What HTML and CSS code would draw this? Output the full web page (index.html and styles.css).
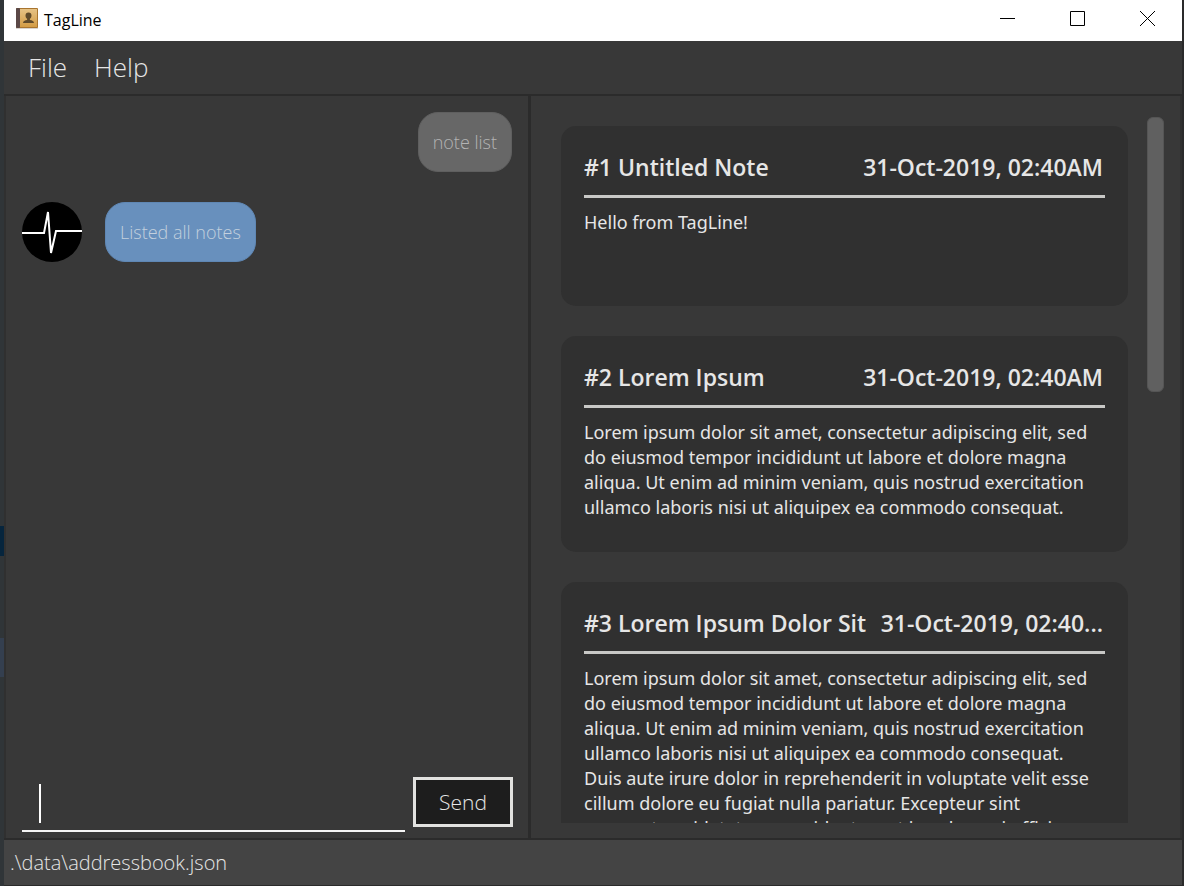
FILE: index.html
```html
<!DOCTYPE html>
<html lang="en">
<head>
<meta charset="utf-8">
<title>TagLine</title>
<link rel="stylesheet" href="styles.css">
</head>
<body>
<div class="desktop">
  <div class="edge edge-left"><span class="edge-top"></span><span class="edge-blue"></span><span class="edge-gap"></span><span class="edge-slate"></span></div>
  <div class="window">
    <header class="titlebar">
      <svg class="app-icon" viewBox="0 0 22 21" aria-hidden="true">
        <defs>
          <linearGradient id="cover" x1="0" y1="0" x2="0" y2="1">
            <stop offset="0" stop-color="#e6c285"/><stop offset="1" stop-color="#d39c45"/>
          </linearGradient>
        </defs>
        <rect x="0" y="19" width="22" height="2" fill="#d8d4d0"/>
        <rect x="0" y="0" width="22" height="20" rx="1" fill="#a9752f"/>
        <rect x="4" y="1" width="17" height="18" fill="url(#cover)"/>
        <rect x="0" y="0" width="4" height="20" rx="1" fill="#5b4847"/>
        <path d="M12.500 4.500c2 0 3 1.300 3 3 0 1.500-.6 2.600-1.600 3.200v1.300c2.200.4 4.100 1 4.100 3H7c0-2 1.900-2.600 4.100-3v-1.300c-1-.6-1.600-1.700-1.600-3.200 0-1.700 1-3 3-3z" fill="#5f4a2b"/>
      </svg>
      <h1 class="app-title">TagLine</h1>
      <div class="window-buttons">
        <button type="button" class="window-button" aria-label="Minimize"><svg viewBox="0 0 15 15"><path d="M0 7.500h15"/></svg></button>
        <button type="button" class="window-button" aria-label="Maximize"><svg viewBox="0 0 15 15"><path d="M.5.5h14v14H.5z"/></svg></button>
        <button type="button" class="window-button" aria-label="Close"><svg viewBox="0 0 15 15"><path d="M0 0l15 15M15 0L0 15"/></svg></button>
      </div>
    </header>
    <nav class="menubar">
      <button type="button" class="menu">File</button>
      <button type="button" class="menu">Help</button>
    </nav>
    <main class="panes">
      <section class="chat" aria-label="Chat">
        <div class="messages">
          <div class="message message-user"><p class="bubble">note list</p></div>
          <div class="message">
            <svg class="avatar" viewBox="0 0 60 60" aria-hidden="true">
              <circle cx="30" cy="30" r="30" fill="#000"/>
              <path d="M0 31h22l4-21 3 41 5-22h26" fill="none" stroke="#fff" stroke-width="2"/>
            </svg>
            <p class="bubble bubble-reply">Listed all notes</p>
          </div>
        </div>
        <form class="command">
          <div class="command-field">
            <span class="caret"></span>
            <input class="command-input" type="text" aria-label="Command">
          </div>
          <button type="button" class="send">Send</button>
        </form>
      </section>
      <section class="notes" aria-label="Notes">
        <div class="note-list">
          <article class="note">
            <header class="note-head"><h2 class="note-title">#1 Untitled Note</h2><time class="note-time">31-Oct-2019, 02:40AM</time></header>
            <p class="note-text">Hello from TagLine!</p>
          </article>
          <article class="note">
            <header class="note-head"><h2 class="note-title">#2 Lorem Ipsum</h2><time class="note-time">31-Oct-2019, 02:40AM</time></header>
            <p class="note-text">Lorem ipsum dolor sit amet, consectetur adipiscing elit, sed do eiusmod tempor incididunt ut labore et dolore magna aliqua. Ut enim ad minim veniam, quis nostrud exercitation ullamco laboris nisi ut aliquipex ea commodo consequat.</p>
          </article>
          <article class="note">
            <header class="note-head"><h2 class="note-title">#3 Lorem Ipsum Dolor Sit</h2><time class="note-time">31-Oct-2019, 02:40...</time></header>
            <p class="note-text">Lorem ipsum dolor sit amet, consectetur adipiscing elit, sed do eiusmod tempor incididunt ut labore et dolore magna aliqua. Ut enim ad minim veniam, quis nostrud exercitation ullamco laboris nisi ut aliquipex ea commodo consequat. Duis aute irure dolor in reprehenderit in voluptate velit esse cillum dolore eu fugiat nulla pariatur. Excepteur sint occaecat cupidatat non proident, sunt in culpa qui officia</p>
          </article>
        </div>
        <div class="scrollbar"><div class="thumb"></div></div>
      </section>
    </main>
    <footer class="statusbar">.\data\addressbook.json</footer>
  </div>
  <div class="edge"></div>
</div>
</body>
</html>
```
FILE: styles.css
```css
* { box-sizing: border-box; }

body {
  margin: 0;
  background: #2b2b2b;
  color: #e6e6e6;
  font-family: "Open Sans", "Noto Sans", sans-serif;
}

h1, h2, p { margin: 0; font-weight: 400; }

button, input { font: inherit; color: inherit; border: 0; padding: 0; background: none; }

.desktop {
  display: grid;
  grid-template-columns: 4px minmax(0, 1fr) 2px;
  height: 100vh;
}

.edge { background: #2a2a2b; }
.edge-left { display: flex; flex-direction: column; background: #303538; }
.edge-top { flex: 0 0 526px; }
.edge-blue { flex: 0 0 30px; background: #06253d; }
.edge-gap { flex: 0 0 82px; }
.edge-slate { flex: 0 0 39px; background: #343f4f; }

.window {
  display: flex;
  flex-direction: column;
  min-height: 0;
  border-bottom: 1px solid #2b2b2b;
  background: #383838;
}

.titlebar {
  display: flex;
  flex: none;
  align-items: center;
  height: 41px;
  padding-left: 12px;
  background: #fff;
  color: #000;
}

.app-icon { width: 22px; height: 21px; margin-bottom: 4px; }
.app-title { margin: 0 auto 2px 6px; font-size: 16px; line-height: 24px; }
.window-buttons { display: flex; align-self: flex-start; height: 37px; }
.window-button { display: grid; place-items: center; width: 70px; }
.window-button svg { width: 15px; height: 15px; fill: none; stroke: #000; }

.menubar {
  display: flex;
  flex: none;
  gap: 27px;
  height: 55px;
  padding: 0 24px 2px;
  border-bottom: 2px solid #2b2b2b;
}

.menu { font-size: 26px; font-weight: 300; }

.panes {
  display: grid;
  flex: 1;
  grid-template-columns: 527fr 651fr;
  min-height: 0;
  border-bottom: 2px solid #2b2b2b;
}

.chat {
  display: flex;
  flex-direction: column;
  padding: 16px 15px 6px 16px;
  border-left: 2px solid #303030;
  border-right: 3px solid #2b2b2b;
}

.messages { display: flex; flex: 1; flex-direction: column; gap: 30px; padding-right: 1px; }
.message { display: flex; gap: 23px; }
.message-user { justify-content: flex-end; }
.avatar { width: 60px; height: 60px; }

.bubble {
  padding: 0 14px;
  border: 1px solid #5f5f5f;
  border-radius: 20px;
  background: #676767;
  color: #b4b4b4;
  font-size: 18px;
  font-weight: 300;
  line-height: 58px;
}

.bubble-reply { border-color: #5f87b4; background: #6890bd; color: #c3d0de; }

.command { display: flex; gap: 8px; }

.command-field {
  display: flex;
  flex: 1;
  align-items: center;
  min-width: 0;
  height: 55px;
  padding-left: 17px;
  border-bottom: 2px solid #f4f4f4;
}

.caret { width: 2px; height: 39px; background: #fff; }
.command-input { flex: 1; min-width: 0; height: 40px; outline: 0; font-size: 22px; }

.send {
  width: 100px;
  height: 50px;
  border: 3px solid #e2e2e0;
  background: #1d1d1d;
  font-size: 21px;
  font-weight: 300;
}

.notes {
  display: flex;
  gap: 19px;
  min-width: 0;
  min-height: 0;
  padding: 21px 16px 15px 30px;
  border-right: 2px solid #303030;
}

.note-list {
  display: flex;
  flex: 1;
  flex-direction: column;
  gap: 30px;
  min-width: 0;
  padding-top: 9px;
  overflow: hidden;
}

.note {
  flex: none;
  min-height: 180px;
  padding: 22px 23px 32px;
  border-radius: 15px;
  background: #303030;
}

.note-head {
  display: flex;
  justify-content: space-between;
  padding: 0 2px 9px 0;
  border-bottom: 3px solid #c8c8c6;
  font-size: 23px;
  line-height: 38px;
  white-space: nowrap;
}

.note-title { font-size: 23px; font-weight: 600; }
.note-time { font-weight: 600; }

.note-text {
  padding: 12px 8px 0 0;
  font-family: "Noto Sans", "Open Sans", sans-serif;
  font-size: 18px;
  line-height: 25px;
}

.scrollbar { width: 17px; }
.thumb { height: 39%; border: 1px solid #555; border-radius: 6px; background: #606060; }

.statusbar {
  flex: none;
  height: 45px;
  padding-left: 6px;
  background: #444;
  font-size: 20px;
  font-weight: 300;
  line-height: 46px;
}
```
